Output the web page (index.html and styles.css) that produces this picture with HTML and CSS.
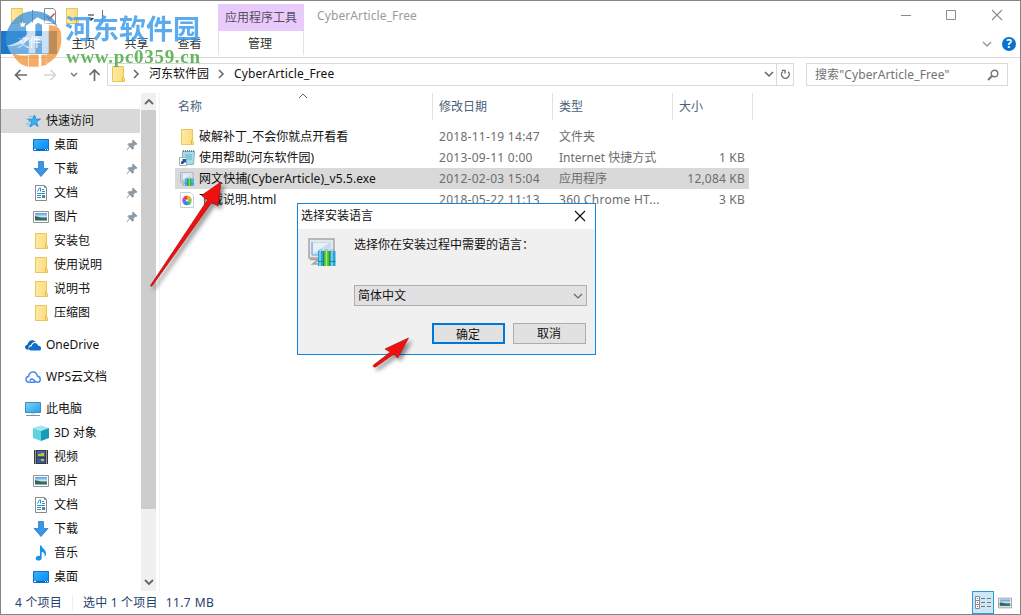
FILE: index.html
```html
<!DOCTYPE html>
<html lang="zh-CN">
<head>
    <meta charset="UTF-8">
    <title>CyberArticle_Free</title>
    <link rel="stylesheet" href="styles.css">
</head>
<body>
    <!-- iconos -->
    <svg class="defs">
        <defs>
            <linearGradient id="gFolder"><stop offset="0" stop-color="#ffe9a2"/><stop offset="1" stop-color="#fbdc7c"/></linearGradient>
            <linearGradient id="gBlue" x2="1" y2="1"><stop offset="0" stop-color="#37b4ff"/><stop offset="1" stop-color="#0589f5"/></linearGradient>
            <linearGradient id="gSky" x2="0" y2="1"><stop offset="0" stop-color="#4c97e5"/><stop offset=".5" stop-color="#dceefa"/><stop offset=".6" stop-color="#37655f"/><stop offset="1" stop-color="#9dc0d2"/></linearGradient>
            <linearGradient id="gPc" x2="1" y2="1"><stop offset="0" stop-color="#7fd3fb"/><stop offset="1" stop-color="#279ee6"/></linearGradient>
        </defs>
        <symbol id="folder" viewBox="0 0 16 16"><path d="M2.5.5h11v11l1 1v3h-12z" fill="url(#gFolder)" stroke="#e8c65c"/><path d="M12.500 15v-4h1" fill="none" stroke="#e0b83c"/></symbol>
        <symbol id="star" viewBox="0 0 16 16"><path d="M9.500 2l1.300 4.200 4.700-.2-4 2.800 1.600 4.700-4-2.600L5 14l1.600-5L3 6.200h4.600z" fill="#35b3f5" stroke="#1683cf" stroke-width=".8"/><path d="M4 3.500h4M1 6h4M3 8.500h2M1 11h4M3 13h2" stroke="#5cb4ea" stroke-width=".8"/></symbol>
        <symbol id="desktop" viewBox="0 0 16 16"><path d="M.5 2.500h15v11H.5z" fill="url(#gBlue)" stroke="#1273c4"/><path d="M1 12.500h14" stroke="#0865ad"/><path d="M1 12.500h2m9 0h1m1 0h1" stroke="#fff"/></symbol>
        <symbol id="download" viewBox="0 0 16 16"><path d="M5.500.5h5v7h4.500L8 15.500 1 7.500h4.500z" fill="#3c94e4" stroke="#2c7bca" stroke-width=".8"/></symbol>
        <symbol id="doc" viewBox="0 0 16 16"><path d="M2.500.5h9l2 2v13h-11z" fill="#fff" stroke="#8a8a8a"/><path d="M11.500.5v2h2" fill="none" stroke="#8a8a8a"/><path d="M4.500 6.500L6.500 3h1v3.500M9 4.500h2M9 6.500h3M4 8.500h8M4 10.500h4M4 12.500h4" fill="none" stroke="#2f90c8"/><path d="M9 10h3v3H9z" fill="#4d88a8"/></symbol>
        <symbol id="picture" viewBox="0 0 16 16"><path d="M.5 2.500h15v11H.5z" fill="#fff" stroke="#949494"/><path d="M2 4h12v8H2z" fill="url(#gSky)"/><path d="M2 7l4 1 3 1.500 5 .5v1H2z" fill="#33685b"/></symbol>
        <symbol id="onedrive" viewBox="0 0 16 16"><path d="M1.600 12.500C-.8 11-.2 8 2.500 7.800 3 3.500 8 1.500 10.500 5 8 4.800 6.500 6 6 8 3.500 8.300 3 11 4 12.500z" fill="#0a64b8"/><path d="M6 13.500c-3 0-3.200-4 .8-4.300C7.500 5 12 5 13 8.500c4 .2 4 5 1 5z" fill="#0f6fcb"/></symbol>
        <symbol id="wps" viewBox="0 0 16 16"><path d="M10 13.200H4C.2 13 0 8 3.600 7.600 4 1.500 11.500 1.500 12.300 7c4 .8 3.800 6.200 0 6.200-3 0-3-3-5.300-3.200-1.500 0-2 1.300-1.500 2" fill="none" stroke="#4a86ee" stroke-width="1.500"/></symbol>
        <symbol id="pc" viewBox="0 0 16 16"><path d="M.5 1.500h15v10H.5z" fill="url(#gPc)" stroke="#3c8dbd"/><path d="M6 12h4v2H6z" fill="#d3e4ee"/><path d="M1 14.500h14" stroke="#7b95a6"/></symbol>
        <symbol id="cube" viewBox="0 0 16 16"><path d="M0 3l8-2.500L16 3l-8 3z" fill="#9be8f1"/><path d="M0 3l8 3v10l-8-3z" fill="#5fd3e0"/><path d="M8 6l8-3v10l-8 3z" fill="#189bb8"/></symbol>
        <symbol id="video" viewBox="0 0 16 16"><path d="M1 1h14v14H1z" fill="#383838"/><path d="M4 2h8v6H4z" fill="#356bb5"/><path d="M4 9h8v5H4z" fill="#2d5da7"/><path d="M5 5h3v-1h3v3H5zM8 10h3v2H8z" fill="#d9b92c"/><path d="M2.500 1.500v14M13.500 1.500v14" stroke="#fff" stroke-dasharray="1 1"/></symbol>
        <symbol id="music" viewBox="0 0 16 16"><path d="M7 .5h1.500c.4 3 5 4 4.500 9-.3 1.200-1 2-1.600 2.300C12.500 9 10.500 7 8.700 6.700V13c0 3.300-6 3.500-6 .5C2.700 11 5.500 10.300 7 11z" fill="#1593ec"/></symbol>
        <symbol id="pin" viewBox="0 0 12 12"><path d="M7 1l4 4-1.200.5-.6-.2-2 2 .3 2.200-1 .7L2 5.500l.8-.9 2.200.3 2-2L6.500 2zM4 7L.8 11" fill="#8e9aa4" stroke="#8e9aa4" stroke-width="1"/></symbol>
        <symbol id="setup" viewBox="0 0 32 32"><path d="M3 3h25v19H3z" fill="#e4e6e8" stroke="#a3a8ac" stroke-width="1.500"/><path d="M6 6h19v13H6z" fill="#c7dcf3"/><path d="M7 7h16L7 18z" fill="#e6f0fb"/><path d="M6 6v13h6" fill="none" stroke="#6f9fe0"/><path d="M4 23.500h9l-6 4.500h6" fill="none" stroke="#9ea2a5" stroke-width="1.600"/><path d="M12 15h6v15h-6zM24 15h5.500v15H24z" fill="#27a4d4"/><path d="M18 15h6v15h-6z" fill="#4fc02a"/><path d="M14 15v15M26 15v15" stroke="#7fdcf0" stroke-width="1.500"/><path d="M20.500 15v15" stroke="#aeea72" stroke-width="1.500"/><path d="M12 25.500h6M24 25.500h5.500" stroke="#126c90" stroke-width=".7"/><path d="M17.500 15v15M23.500 15v15" stroke="#1c7a50" stroke-width=".7"/><path d="M12.500 15l2-1.500 2 1.500M18.500 15l2-1.500 2 1.500M24.500 15l2-1.500 2 1.500" fill="#dfeeee" stroke="#78908f" stroke-width=".8"/></symbol>
        <symbol id="link" viewBox="0 0 16 16"><path d="M3.500 1.500h12l-1 13h-11z" fill="#a5dcec" stroke="#8cb3be"/><path d="M4 1h11" stroke="#596a70" stroke-width="1.500" stroke-dasharray="1 1"/><path d="M6 5h7M6 7h7M6 9h7" stroke="#4baac6" stroke-width=".8"/><path d="M.5 7.500h7v8h-7z" fill="#fff" stroke="#aaa"/><path d="M2 14v-2l2-2-1-1h4v4l-1-1-2 2z" fill="#1f57a3"/></symbol>
        <symbol id="html" viewBox="0 0 16 16"><path d="M1.500.5h10l3 3v12h-13z" fill="#fff" stroke="#d0d0d0"/><g transform="translate(8 8.500) scale(1.200) translate(-8 -8)"><path d="M8 8V4a4 4 0 0 1 3.500 2z" fill="#f5a11b"/><path d="M8 8l3.500-2a4 4 0 0 1 0 4z" fill="#85cf29"/><path d="M8 8l3.500 2A4 4 0 0 1 8 12z" fill="#21b5a3"/><path d="M8 8v4a4 4 0 0 1-3.500-2z" fill="#2b83ef"/><path d="M8 8l-3.500 2a4 4 0 0 1 0-4z" fill="#a44be6"/><path d="M8 8L4.500 6A4 4 0 0 1 8 4z" fill="#f33856"/><circle cx="8" cy="8" r=".8" fill="#fff"/></g></symbol>
        <symbol id="down" viewBox="0 0 10 10"><path d="M1 3l4 4 4-4" fill="none" stroke="currentColor" stroke-width="var(--w, 1.5)"/></symbol>
    </svg>

    <div class="window">
        <header class="titlebar">
            <div class="quick">
                <svg class="ico"><use href="#folder"/></svg>
                <i class="sep"></i>
                <svg class="ico prop" viewBox="0 0 16 16"><path d="M2.500.5h9l2 2v13h-11z" fill="#fff" stroke="#8c8c8c"/><path d="M4.500 8l3 3 5-5.500" fill="none" stroke="#d7552b" stroke-width="1.600"/></svg>
                <svg class="ico"><use href="#folder"/></svg>
                <svg class="more" viewBox="0 0 8 8"><path d="M1 1h6" stroke="#222"/><path d="M1 4h6L4 7z" fill="#222"/></svg>
                <i class="sep"></i>
            </div>
            <div class="tool-tab">应用程序工具</div>
            <div class="title">CyberArticle_Free</div>
            <svg class="controls" viewBox="0 0 103 12"><path d="M0 6.500h10M45.500 1.500h9v9h-9z" fill="none" stroke="#8b8b8b"/><path d="M91 1l10 10M101 1L91 11" stroke="#8b8b8b" stroke-width="1.100"/></svg>
        </header>
        <nav class="ribbon">
            <span class="tab file">文件</span>
            <span class="tab">主页</span>
            <span class="tab">共享</span>
            <span class="tab">查看</span>
            <span class="tab manage">管理</span>
            <svg class="chev fold"><use href="#down"/></svg>
            <span class="help">?</span>
        </nav>
        <div class="address">
            <svg class="nav-arrows" viewBox="0 0 86 14"><path d="M13 7H1.500M6.500 2L1.500 7l5 5" fill="none" stroke="#6b6b6b" stroke-width="1.700"/><path d="M30 7h11.500M36.500 2l5 5-5 5" fill="none" stroke="#d6d6d6" stroke-width="1.700"/><path d="M57 5l3 3 3-3" fill="none" stroke="#777" stroke-width="1.400"/><path d="M80.500 13V2M75.500 7l5-5 5 5" fill="none" stroke="#6b6b6b" stroke-width="1.700"/></svg>
            <div class="path">
                <svg class="ico"><use href="#folder"/></svg>
                <svg class="chev right"><use href="#down"/></svg>
                <span>河东软件园</span>
                <svg class="chev right"><use href="#down"/></svg>
                <span class="here">CyberArticle_Free</span>
                <svg class="chev drop"><use href="#down"/></svg>
                <svg class="refresh" viewBox="0 0 12 12"><path d="M3 2.800A4.200 4.200 0 1 0 9 3M2 1.500h3.500V5" fill="none" stroke="#6e6e6e" stroke-width="1.500"/></svg>
            </div>
            <div class="search">
                <span>搜索"CyberArticle_Free"</span>
                <svg viewBox="0 0 12 12"><circle cx="7.500" cy="4.500" r="3.300" fill="none" stroke="#777" stroke-width="1.400"/><path d="M5 7L1 11" stroke="#777" stroke-width="2"/></svg>
            </div>
        </div>

        <main class="content">
            <aside class="tree">
                <div class="node root active"><svg class="ico"><use href="#star"/></svg>快速访问</div>
                <div class="node"><svg class="ico"><use href="#desktop"/></svg>桌面<svg class="pin"><use href="#pin"/></svg></div>
                <div class="node"><svg class="ico"><use href="#download"/></svg>下载<svg class="pin"><use href="#pin"/></svg></div>
                <div class="node"><svg class="ico"><use href="#doc"/></svg>文档<svg class="pin"><use href="#pin"/></svg></div>
                <div class="node"><svg class="ico"><use href="#picture"/></svg>图片<svg class="pin"><use href="#pin"/></svg></div>
                <div class="node"><svg class="ico"><use href="#folder"/></svg>安装包</div>
                <div class="node"><svg class="ico"><use href="#folder"/></svg>使用说明</div>
                <div class="node"><svg class="ico"><use href="#folder"/></svg>说明书</div>
                <div class="node"><svg class="ico"><use href="#folder"/></svg>压缩图</div>
                <div class="node root gap"><svg class="ico"><use href="#onedrive"/></svg>OneDrive</div>
                <div class="node root gap"><svg class="ico"><use href="#wps"/></svg>WPS云文档</div>
                <div class="node root gap"><svg class="ico"><use href="#pc"/></svg>此电脑</div>
                <div class="node"><svg class="ico"><use href="#cube"/></svg>3D 对象</div>
                <div class="node"><svg class="ico"><use href="#video"/></svg>视频</div>
                <div class="node"><svg class="ico"><use href="#picture"/></svg>图片</div>
                <div class="node"><svg class="ico"><use href="#doc"/></svg>文档</div>
                <div class="node"><svg class="ico"><use href="#download"/></svg>下载</div>
                <div class="node"><svg class="ico"><use href="#music"/></svg>音乐</div>
                <div class="node"><svg class="ico"><use href="#desktop"/></svg>桌面</div>
            </aside>
            <div class="scrollbar">
                <svg class="chev up"><use href="#down"/></svg>
                <div class="thumb"></div>
                <svg class="chev"><use href="#down"/></svg>
            </div>
            <section class="files">
                <div class="row head">
                    <span class="name">名称<svg class="chev up sort"><use href="#down"/></svg></span><span>修改日期</span><span>类型</span><span class="last">大小</span>
                </div>
                <div class="row">
                    <span class="name"><svg class="ico"><use href="#folder"/></svg>破解补丁_不会你就点开看看</span><span class="date">2018-11-19 14:47</span><span>文件夹</span><span class="size"></span>
                </div>
                <div class="row">
                    <span class="name"><svg class="ico"><use href="#link"/></svg>使用帮助(河东软件园)</span><span class="date">2013-09-11 0:00</span><span>Internet 快捷方式</span><span class="size">1 KB</span>
                </div>
                <div class="row selected">
                    <span class="name exe"><svg class="ico"><use href="#setup"/></svg>网文快捕(CyberArticle)_v5.5.exe</span><span class="date">2012-02-03 15:04</span><span>应用程序</span><span class="size">12,084 KB</span>
                </div>
                <div class="row">
                    <span class="name"><svg class="ico"><use href="#html"/></svg>下载说明.html</span><span class="date">2018-05-22 11:13</span><span class="date">360 Chrome HT...</span><span class="size">3 KB</span>
                </div>
            </section>
        </main>
        <footer class="status">
            <span class="count">4 个项目</span><span class="chosen">选中 1 个项目</span><span class="total">11.7 MB</span>
            <div class="view on"><svg viewBox="0 0 17 14"><path d="M.5.5h4v12h-4zM.5 4.500h4M.5 8.500h4" fill="#fff" stroke="#8b8b8b"/><path d="M6 2.500h4M12 2.500h4M6 6.500h4M12 6.500h4M6 10.500h4M12 10.500h4" stroke="#777"/><path d="M2 2h1v1H2zM2 6h1v1H2z" fill="#2385d6"/><path d="M2 10h1v1H2z" fill="#e23c28"/></svg></div>
            <div class="view"><svg class="ico"><use href="#picture"/></svg></div>
        </footer>
    </div>

    <div class="dialog">
        <div class="dialog-title">选择安装语言<svg viewBox="0 0 12 12"><path d="M1 1l10 10M11 1L1 11" stroke="#111" stroke-width="1.200"/></svg></div>
        <div class="dialog-body">
            <svg class="setup-icon"><use href="#setup"/></svg>
            <div class="fields">
                <p>选择你在安装过程中需要的语言：</p>
                <div class="select">简体中文<svg class="chev"><use href="#down"/></svg></div>
            </div>
        </div>
        <div class="buttons"><button class="ok">确定</button><button>取消</button></div>
    </div>

    <!-- marca de agua -->
    <div class="watermark">
        <svg viewBox="0 0 189 210">
            <circle cx="99" cy="116" r="80" fill="#fff" fill-opacity=".5"/>
            <path d="M20 136C8 76 58 32 102 33c42 1 66 26 70 48-14-14-28-20-42-20L112 52 78 78v28c-16 18-36 26-58 30z" fill="#3f93d6"/>
            <path d="M20 138c22 2 42-4 60-18v28c-22 4-44 2-60-10z" fill="#8fc6ef" fill-opacity=".7"/>
            <path d="M36 158c16 8 32 10 48 8v34c-22-4-38-20-48-42z" fill="#f1933a"/>
            <path d="M86 164h30v36H86zM124 164h16v30l-16 5z" fill="#f1933a"/>
            <path d="M146 76c20 0 32 6 36 18 8 46-8 82-42 98v-28l6-4z" fill="#f1933a"/>
            <path d="M82 80l30-24 34 18v86h-20v-38h-20v38H86v-40c-20 14-42 20-66 18 26-6 48-18 62-36z" fill="#fff"/>
            <path d="M106 74l8-6 12 7v33h-20z" fill="#3f93d6"/>
            <path d="M68 64l3 6 7 0-5 5 1 7-6-3-6 3 1-7-5-5 7 0z" fill="#fff"/>
        </svg>
        <div class="brand"><b>河东软件园</b><i>www.pc0359.cn</i></div>
    </div>

    <svg class="arrows" viewBox="0 0 1021 615">
        <g fill="#f01010" stroke="#b00c0c" stroke-width=".7">
            <path d="M150.500 285.500L207.500 200l-6-4.500L221 182l-3 24-6-4-60 84q-1.500.5-1.500-.5z"/>
            <path d="M373 365.500L390.500 352l-5.500-3 23.500-11-11 20-3.500-4-18.500 13q-2 .5-2.500-1.500z"/>
        </g>
    </svg>
</body>
</html>
```
FILE: styles.css
```css
* {
    box-sizing: border-box;
}

body {
    margin: 0;
    width: 1021px;
    height: 615px;
    overflow: hidden;
    position: relative;
    background: #fff;
    color: #111;
    font: 12px/16px "Noto Sans", "Noto Sans CJK SC", sans-serif;
    white-space: nowrap;
}

svg {
    display: block;
    flex: none;
}

.defs {
    position: absolute;
    width: 0;
    height: 0;
}

.ico {
    width: 16px;
    height: 16px;
}

.chev {
    width: 10px;
    height: 10px;
    color: #666;
}

.chev.right {
    transform: rotate(-90deg);
}

.chev.up {
    transform: rotate(180deg);
}

.window {
    display: flex;
    flex-direction: column;
    width: 1021px;
    height: 615px;
    border: 1px solid #858585;
}

/* barra de titulo */
.titlebar {
    display: flex;
    height: 30px;
}

.quick {
    display: flex;
    align-items: center;
    width: 217px;
    padding-left: 8px;
}

.sep {
    width: 1px;
    height: 13px;
    margin: 0 9px 0 7px;
    background: #777;
}

.prop {
    margin-right: 6px;
}

.more {
    width: 8px;
    height: 8px;
    margin: 3px 0 0 7px;
}

.tool-tab {
    width: 86px;
    height: 27px;
    margin-top: 3px;
    padding-top: 6px;
    text-align: center;
    background: #e9cbfb;
    color: #574b5d;
}

.title {
    padding: 7px 0 0 13px;
    letter-spacing: .1px;
    color: #9a9a9a;
}

.controls {
    width: 103px;
    height: 12px;
    margin: 8px 16px 0 auto;
}

/* menu */
.ribbon {
    display: flex;
    align-items: center;
    height: 27px;
    border-bottom: 1px solid #dadada;
    color: #333;
}

.tab {
    width: 53px;
    text-align: center;
}

.file {
    width: 56px;
    height: 23px;
    margin: 0 0 4px;
    line-height: 24px;
    background: #1979ca;
    color: #fff;
}

.manage {
    width: 86px;
    height: 24px;
    margin: 0 0 3px 2px;
    padding-right: 2px;
    line-height: 26px;
    border: 1px solid #e2e2e2;
    border-width: 0 1px;
}

.fold {
    margin: 0 10px 0 auto;
    color: #999;
}

.help {
    width: 14px;
    height: 14px;
    margin-right: 4px;
    border-radius: 50%;
    background: #0872cf;
    color: #fff;
    font-weight: bold;
    line-height: 14px;
    text-align: center;
}

.address {
    display: flex;
    height: 34px;
    padding-top: 5px;
}

.nav-arrows {
    width: 86px;
    height: 14px;
    margin: 5px 7px 0 13px;
}

.path {
    display: flex;
    align-items: center;
    width: 687px;
    height: 23px;
    padding: 0 0 1px 2px;
    border: 1px solid #d9d9d9;
}

.path .right {
    margin: 0 8px 0 5px;
}

.path span + .right {
    margin: 0 8px 0 7px;
}

.path .here {
    letter-spacing: .12px;
}

.path .drop {
    margin: 0 2px 0 auto;
}

.refresh {
    width: 17px;
    height: 21px;
    padding: 4px 2px 4px 3px;
    border-left: 1px solid #d9d9d9;
}

.search {
    display: flex;
    align-items: center;
    justify-content: space-between;
    width: 202px;
    height: 23px;
    margin-left: 12px;
    padding: 0 8px 0 8px;
    border: 1px solid #d9d9d9;
    letter-spacing: .12px;
    color: #737373;
}

.search svg {
    width: 12px;
    height: 12px;
}

.content {
    display: flex;
    height: 499px;
}

/* panel izquierdo */
.tree {
    width: 140px;
    padding: 17px 1px 0 0;
}

.node {
    display: flex;
    align-items: center;
    gap: 5px;
    height: 24px;
    padding-left: 32px;
}

.root {
    padding-left: 24px;
}

.active {
    background: #d9d9d9;
}

.gap {
    margin-top: 8px;
}

.pin {
    width: 12px;
    height: 12px;
    margin: 0 2px 0 auto;
}

.scrollbar {
    display: flex;
    flex-direction: column;
    align-items: center;
    width: 15px;
    height: 498px;
    margin-top: 1px;
    padding: 4px 0;
    background: #f0f0f0;
}

.scrollbar .chev {
    --w: 1.8;
}

.thumb {
    width: 15px;
    height: 399px;
    margin: 3px 0 auto;
    background: #cdcdcd;
}

/* lista de archivos */
.files {
    flex: 1;
    margin-left: 3px;
    padding: 1px 0 0 15px;
    border-left: 1px solid #f3f3f3;
}

.row {
    display: grid;
    grid-template-columns: 258px 120px 120px 76px;
    align-items: center;
    width: 574px;
    height: 21px;
    color: #6d6d6d;
}

.row span {
    padding-left: 6px;
}

.row .name {
    display: flex;
    align-items: center;
    gap: 4px;
    padding-left: 4px;
    color: #111;
}

.row .exe {
    letter-spacing: .08px;
}

.date {
    letter-spacing: .28px;
}

.row .size {
    padding: 0 4px 0 0;
    letter-spacing: .2px;
    text-align: right;
}

.head {
    grid-template-columns: 258px 120px 120px 80px;
    width: 578px;
    height: 27px;
    margin-bottom: 6px;
}

.head span,
.head .name {
    height: 27px;
    padding-left: 6px;
    border-right: 1px solid #e2e2e2;
    line-height: 27px;
    color: #4c607a;
}

.head .name {
    padding-left: 3px;
}

.sort {
    --w: 1;
    margin: -22px 0 0 92px;
}

.selected {
    background: #d9d9d9;
}

.status {
    display: flex;
    align-items: center;
    height: 23px;
    letter-spacing: .2px;
    color: #26426b;
}

.count {
    width: 72px;
    padding-left: 14px;
    border-right: 1px solid #eee;
}

.chosen {
    padding-left: 10px;
}

.total {
    padding-left: 8px;
    letter-spacing: .4px;
}

.view {
    display: flex;
    align-items: center;
    justify-content: center;
    width: 22px;
    height: 23px;
    margin-right: 4px;
}

.view .ico {
    width: 14px;
}

.on {
    margin: 0 0 0 auto;
    border: 1px solid #2a9bd6;
    background: #cce8f6;
}

.on svg {
    width: 17px;
    height: 14px;
}

/* ventana de idioma */
.dialog {
    position: absolute;
    left: 297px;
    top: 203px;
    width: 299px;
    height: 152px;
    border: 1px solid #1883d7;
    background: #f0f0f0;
}

.dialog-title {
    display: flex;
    align-items: center;
    justify-content: space-between;
    height: 25px;
    padding: 0 9px 1px 3px;
    background: #fff;
}

.dialog-title svg {
    width: 12px;
    height: 12px;
}

.dialog-body {
    display: flex;
    gap: 16px;
    padding: 8px 0 0 8px;
}

.setup-icon {
    width: 32px;
    height: 32px;
    margin-top: -1px;
}

.fields p {
    margin: 0 0 32px;
}

.select {
    display: flex;
    align-items: center;
    justify-content: space-between;
    width: 233px;
    height: 21px;
    padding: 1px 3px 0;
    border: 1px solid #adadad;
    background: #e1e1e1;
}

.select .chev {
    --w: 1.2;
}

.buttons {
    display: flex;
    justify-content: flex-end;
    gap: 8px;
    padding: 17px 9px 0 0;
}

button {
    width: 73px;
    height: 21px;
    padding: 1px 1px 0 0;
    border: 1px solid #adadad;
    background: #e1e1e1;
    color: #111;
    font: inherit;
    line-height: 18px;
}

.ok {
    border: 2px solid #0078d7;
}

.watermark {
    position: absolute;
    left: 0;
    top: 0;
    display: flex;
    opacity: .86;
}

.watermark svg {
    width: 63px;
    height: 70px;
    opacity: .9;
}

.brand b {
    display: block;
    margin: 14px 0 0 2px;
    font-size: 27px;
    line-height: 29px;
    color: #419fec;
}

.brand i {
    display: block;
    margin: 1px 0 0 3px;
    font: bold 19px/26px "Liberation Serif", serif;
    letter-spacing: .7px;
    color: #4fac47;
}

.arrows {
    position: absolute;
    left: 0;
    top: 0;
    width: 1021px;
    height: 615px;
    filter: drop-shadow(3px 3px 2px rgba(0, 0, 0, .45));
}
```
